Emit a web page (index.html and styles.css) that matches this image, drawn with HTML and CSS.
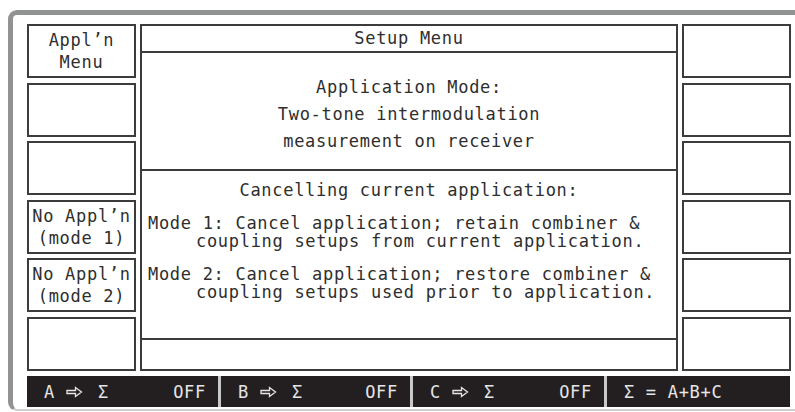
FILE: index.html
```html
<!DOCTYPE html>
<html lang="en">
<head>
  <meta charset="UTF-8">
  <meta name="viewport" content="width=device-width, initial-scale=1.0">
  <title>Setup Menu</title>
  <link rel="stylesheet" href="styles.css">
</head>
<body>

  <div class="frame">
    <div class="screen">
      <div class="keys">
        <div class="key">Appl’n<br>Menu</div>
        <div class="key"></div>
        <div class="key"></div>
        <div class="key">No Appl’n<br>(mode 1)</div>
        <div class="key">No Appl’n<br>(mode 2)</div>
        <div class="key"></div>
      </div>

      <div class="panel">
        <div class="title">Setup Menu</div>
        <div class="mode">
          Application Mode:<br>
          Two-tone intermodulation<br>
          measurement on receiver
        </div>
        <div class="info">
          <p class="heading">Cancelling current application:</p>
          <p class="desc">Mode 1: Cancel application; retain combiner &amp;<br>coupling setups from current application.</p>
          <p class="desc">Mode 2: Cancel application; restore combiner &amp;<br>coupling setups used prior to application.</p>
        </div>
        <div class="status"></div>
      </div>

      <div class="keys">
        <div class="key"></div>
        <div class="key"></div>
        <div class="key"></div>
        <div class="key"></div>
        <div class="key"></div>
        <div class="key"></div>
      </div>
    </div>

    <!-- combiner status bar -->
    <div class="bar">
      <div class="seg">
        <span class="ch">A</span>
        <svg class="arrow" width="17" height="12" viewBox="0 0 17 12"><path d="M1 4.5H9.5V1.5L15.5 6L9.5 10.5V7.5H1Z" fill="none" stroke="#e6e6e6" stroke-width="1.3"/></svg>
        <span class="ch">Σ</span>
        <span class="off">OFF</span>
      </div>
      <div class="seg">
        <span class="ch">B</span>
        <svg class="arrow" width="17" height="12" viewBox="0 0 17 12"><path d="M1 4.5H9.5V1.5L15.5 6L9.5 10.5V7.5H1Z" fill="none" stroke="#e6e6e6" stroke-width="1.3"/></svg>
        <span class="ch">Σ</span>
        <span class="off">OFF</span>
      </div>
      <div class="seg">
        <span class="ch">C</span>
        <svg class="arrow" width="17" height="12" viewBox="0 0 17 12"><path d="M1 4.5H9.5V1.5L15.5 6L9.5 10.5V7.5H1Z" fill="none" stroke="#e6e6e6" stroke-width="1.3"/></svg>
        <span class="ch">Σ</span>
        <span class="off">OFF</span>
      </div>
      <div class="seg">
        <span class="sum">Σ = A+B+C</span>
      </div>
    </div>
  </div>

</body>
</html>
```

FILE: styles.css
```css
html, body {
  overflow: hidden;
}
body {
  margin: 0;
  background-color: #fff;
  font-family: "DejaVu Sans Mono", "Liberation Mono", monospace;
  font-size: 17px;
  letter-spacing: 0.7px;
  color: #2e2e2e;
}
.frame {
  box-sizing: border-box;
  width: 787px;
  margin: 10px 0 0 8px;
  padding: 9px 0 2px 14px;
  border-left: 5px solid #919393;
  border-top: 5px solid #919393;
  border-bottom: 2px solid #cfcfcf;
  border-top-left-radius: 9px;
  border-bottom-left-radius: 9px;
  background-color: #fff;
}
.screen {
  display: grid;
  grid-template-columns: 109px 538px 109px;
  column-gap: 4px;
  height: 347px;
}
.keys {
  display: flex;
  flex-direction: column;
  gap: 4.6px;
}
.key {
  flex: 1;
  display: flex;
  align-items: center;
  justify-content: center;
  text-align: center;
  line-height: 22px;
  border: 2px solid #3c3c3c;
  white-space: nowrap;
}
.panel {
  display: flex;
  flex-direction: column;
  border: 2px solid #3c3c3c;
}
.title {
  height: 25px;
  line-height: 25px;
  text-align: center;
  border-bottom: 2px solid #3c3c3c;
}
.mode {
  height: 118px;
  box-sizing: border-box;
  padding-top: 21px;
  line-height: 27px;
  text-align: center;
  border-bottom: 2px solid #3c3c3c;
}
.info {
  height: 169px;
  box-sizing: border-box;
  padding: 10px 0 0 6px;
  line-height: 18px;
  border-bottom: 2px solid #3c3c3c;
}
.info p {
  margin: 0;
  white-space: nowrap;
}
.heading {
  text-align: center;
  padding-right: 6px;
}
.desc {
  margin-top: 15px !important;
  padding-left: 48px;
  text-indent: -48px;
}
.status {
  flex: 1;
}
.bar {
  display: grid;
  grid-template-columns: 191px 189px 191px 1fr;
  column-gap: 3px;
  width: 763px;
  height: 31px;
  margin-top: 5px;
  background-color: #c9c9c9;
}
.seg {
  display: flex;
  align-items: center;
  padding: 0 12px 0 17px;
  background-color: #231f20;
  color: #e6e6e6;
  white-space: nowrap;
}
.arrow {
  margin-left: 11px;
}
.seg .ch + .arrow + .ch {
  margin-left: 15px;
}
.off {
  margin-left: auto;
}
```
